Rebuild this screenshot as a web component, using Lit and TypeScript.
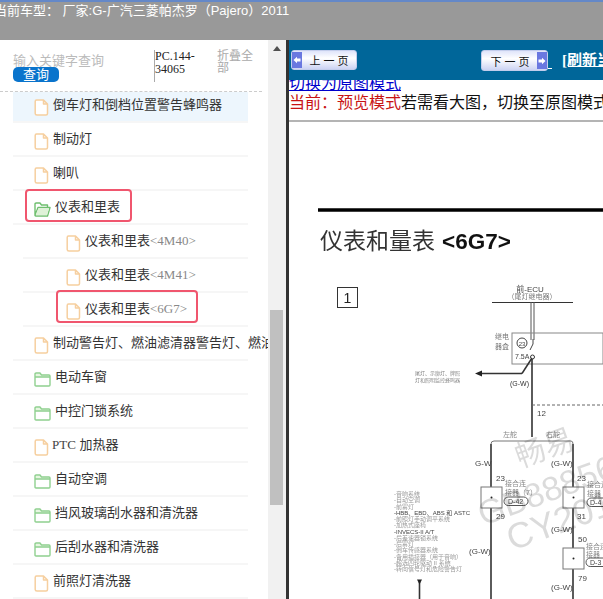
import { LitElement, html, css, svg } from "lit";
import { customElement } from "lit/decorators.js";

const fileIcon = svg`<svg class="ic" width="15" height="17" viewBox="0 0 15 17"><path d="M2.5 1H9.5L13.5 5V14.5Q13.5 16 12 16H3Q1.2 16 1.2 14.5V2.5Q1.2 1 2.5 1ZM9.5 1V5H13.5" fill="#fff" stroke="#f6cf9f" stroke-width="1.5" stroke-linejoin="round"/></svg>`;
const folderIcon = svg`<svg class="ic" width="17" height="15" viewBox="0 0 17 15"><path d="M1.4 1.8H6L7.5 3.4H15.6V5H1.4Z" fill="#e6f6e0"/><path d="M1 13V2.2Q1 1 2.2 1H6L7.5 3H15Q16 3 16 4V13Q16 14 15 14H2Q1 14 1 13ZM1 5H16" fill="none" stroke="#8fd08f" stroke-width="1.4" stroke-linejoin="round"/></svg>`;
const openIcon = svg`<svg class="ic" width="17" height="15" viewBox="0 0 17 15"><path d="M1 13V2.2Q1 1 2.2 1H6L7.5 3H13.5V5.5M1 13.5L4 5.5H16L13.5 14H2Z" fill="#fff" stroke="#6fbf6f" stroke-width="1.4" stroke-linejoin="round"/><path d="M1.8 12.5L4.4 6.2H15.2L13 13.3H2Z" fill="#dff2d8"/></svg>`;

type Row = { t: string; s?: string; k: "f" | "d" | "o"; lvl?: boolean; hi?: boolean; latin?: string };
const rows: Row[] = [
  { t: "倒车灯和倒档位置警告蜂鸣器", k: "f", hi: true },
  { t: "制动灯", k: "f" },
  { t: "喇叭", k: "f" },
  { t: "仪表和里表", k: "o" },
  { t: "仪表和里表", s: "<4M40>", k: "f", lvl: true },
  { t: "仪表和里表", s: "<4M41>", k: "f", lvl: true },
  { t: "仪表和里表", s: "<6G7>", k: "f", lvl: true },
  { t: "制动警告灯、燃油滤清器警告灯、燃油", k: "f" },
  { t: "电动车窗", k: "d" },
  { t: "中控门锁系统", k: "d" },
  { t: " 加热器", latin: "PTC", k: "f" },
  { t: "自动空调", k: "d" },
  { t: "挡风玻璃刮水器和清洗器", k: "d" },
  { t: "后刮水器和清洗器", k: "d" },
  { t: "前照灯清洗器", k: "f" },
];

const listLines = ["-音响系统","-自动空调","-前雾灯","-HBB、EBD、ABS 和 ASTC","-前照灯手动调平系统","-加热式座椅","-INVECS-II A/T","-后差速器锁系统","-后雾灯","-倒车传感器系统","-备用插接器（用于音响）","-超选四轮驱动 II 系统","-转向信号灯和危险警告灯"];

@customElement("app-root")
export class AppRoot extends LitElement {
  static styles = css`
    :host { display: block; width: 603px; height: 599px; overflow: hidden; font-family: "Liberation Sans","Noto Sans CJK SC",sans-serif; background: #fff; }
    .top { height: 38px; border-top: 2px solid #6488c8; background: #999; color: #fff; font-size: 13px; line-height: 17px; white-space: nowrap; overflow: hidden; }
    .top span { display: block; margin-left: -6px; }
    .main { display: flex; height: 559px; }
    .left { width: 286px; display: flex; flex: none; background: #fff; }
    .pane { width: 268px; flex: none; overflow: hidden; }
    .search { height: 52px; display: flex; box-sizing: border-box; padding: 10px 0 0 13px; border-bottom: 1px dashed #ccc; width: 262px; position: relative; z-index: 1; background: #fff; }
    .sbox { width: 141px; flex: none; color: #bbb; font-size: 13px; }
    .sbox .in { height: 17px; padding-top: 3px; box-sizing: border-box; line-height: 16px; }
    .btn { display: block; width: 46px; height: 15px; background: #0a74cc; border-radius: 5px; color: #fff; font-size: 13px; line-height: 15px; text-align: center; }
    .pc { width: 63px; flex: none; height: 32px; border-left: 1px solid #aaa; box-sizing: border-box; font: 12px/13px "Liberation Serif",serif; color: #222; }
    .fold { width: 38px; color: #aaa; font-size: 12px; line-height: 12px; }
    .list { width: 235px; margin: -3px 0 0 13px; position: relative; }
    .row { height: 34px; box-sizing: border-box; border-bottom: 2px solid #f6f6f6; display: flex; align-items: center; font-size: 13px; color: #333; white-space: nowrap; padding: 0 0 4px 21px; }
    .row.hi { background: #edf6fd; }
    .row.l1 { margin-left: 10px; padding-left: 43px; }
    .row .ic { flex: none; margin: 8px 4px 0 0; }
    .row.tight .ic { margin-right: 3px; }
    .row .sub { font-family: "Liberation Serif",serif; font-size: 13px; color: #888; }
    .row .lat { font-family: "Liberation Serif",serif; color: #444; }
    .mark { position: absolute; border: 2px solid #f0566e; border-radius: 4px; box-sizing: border-box; }
    .m1 { left: 12px; top: 100px; width: 107px; height: 33px; }
    .m2 { left: 43px; top: 201px; width: 142px; height: 33px; }
    .sb { width: 18px; flex: none; background: #f1f1f1; position: relative; }
    .sb .up { width: 0; height: 0; border: 4px solid transparent; border-top: 0; border-bottom: 5px solid #505050; margin: 6px 0 0 5px; }
    .sb .th { position: absolute; top: 270px; left: 2px; width: 13px; height: 195px; background: #c0c0c0; }
    .split { width: 3px; flex: none; background: #333; }
    .right { flex: 1; display: flex; flex-direction: column; min-width: 0; overflow: hidden; }
    .nav { height: 40px; background: #006699; flex: none; display: flex; padding: 10px 0 0 2px; box-sizing: border-box; white-space: nowrap; align-items: flex-start; position: relative; z-index: 1; }
    .pg { flex: none; width: 66px; height: 20px; box-sizing: border-box; border: 1px solid #c3cdec; border-radius: 3px; background: linear-gradient(#dfe4fa,#ffffff 40%,#ccd3f3); color: #111; font-size: 11px; word-spacing: 0; display: flex; align-items: center; position: relative; justify-content: center; }
    .pg i { position: absolute; top: 1px; bottom: 1px; width: 10px; background: #6a78e0; display: flex; align-items: center; justify-content: center; }
    .pg.p i { left: 0; }
    .pg.n i { right: 0; }
    .pg.p { padding-left: 10px; }
    .pg.n { margin-left: 124px; height: 21px; width: 67px; padding-right: 9px; }
    .under { flex: none; border-bottom: 1px solid #fff; width: 4px; height: 18px; }
    .ref { flex: none; color: #fff; font: bold 15px/20px "Liberation Serif","Noto Sans CJK SC",serif; text-decoration: underline; margin-left: 10px; }
    .lnk { color: #0000cc; text-decoration: underline; font-size: 16px; line-height: 16px; height: 9px; display: block; margin-top: -4px; }
    .cur { font-size: 16px; line-height: 18px; white-space: nowrap; margin-top: 9px; color: #111; height: 26px; flex: none; }
    .cur b { font-weight: normal; color: #c81414; }
    .hr { height: 2px; background: #b4b4b4; flex: none; }
    .pic { flex: 1; filter: blur(0.45px); }
    svg.dg { display: block; }
  `;
  renderRow(r: Row) {
    const ic = r.k === "f" ? fileIcon : r.k === "d" ? folderIcon : openIcon;
    const cls = `row ${r.hi ? "hi" : ""} ${r.lvl ? "l1" : ""} ${r.latin ? "tight" : ""}`;
    return html`<div class=${cls}>${ic}<span>${r.latin ? html`<span class="lat">${r.latin}</span>` : ""}${r.t}${r.s ? html`<span class="sub">${r.s}</span>` : ""}</span></div>`;
  }
  render() {
    return html`
      <div class="top"><span>当前车型： 厂家:G-广汽三菱帕杰罗（Pajero）2011</span></div>
      <div class="main">
        <div class="left">
          <div class="pane">
            <div class="search">
              <div class="sbox"><div class="in">输入关键字查询</div><span class="btn">查询</span></div>
              <div class="pc">PC.144-34065</div>
              <div class="fold">折叠全部</div>
            </div>
            <div class="list">
              ${rows.map((r) => this.renderRow(r))}
              <div class="mark m1"></div>
              <div class="mark m2"></div>
            </div>
          </div>
          <div class="sb"><div class="up"></div><div class="th"></div></div>
        </div>
        <div class="split"></div>
        <div class="right">
          <div class="nav">
            <div class="pg p"><i><svg width="8" height="8" viewBox="0 0 8 8"><path d="M0.5 4L4 0.8V2.6H7.5V5.4H4V7.2Z" fill="#fff"/></svg></i>上 一 页</div>
            <div class="pg n">下 一 页<i><svg width="8" height="8" viewBox="0 0 8 8"><path d="M7.5 4L4 0.8V2.6H0.5V5.4H4V7.2Z" fill="#fff"/></svg></i></div>
            <div class="under"></div>
            <div class="ref">[刷新当前页]</div>
          </div>
          <a class="lnk">切换为原图模式</a>
          <div class="cur"><b>当前：预览模式</b>若需看大图，切换至原图模式</div>
          <div class="hr"></div>
          <div class="pic">${this.diagram()}</div>
        </div>
      </div>`;
  }
  diagram() {
    const t = (x: number, y: number, s: string, size: number, extra: Record<string, string> = {}) =>
      svg`<text x=${x} y=${y} font-size=${size} fill=${extra.fill ?? "#444"} font-weight=${extra.w ?? "normal"} text-anchor=${extra.a ?? "start"}>${s}</text>`;
    const line = (x1: number, y1: number, x2: number, y2: number, w = 1, c = "#333") =>
      svg`<line x1=${x1} y1=${y1} x2=${x2} y2=${y2} stroke=${c} stroke-width=${w}/>`;
    const box = (x: number, y: number) =>
      svg`<rect x=${x} y=${y} width="21" height="21" fill="#fff" stroke="#777"/><circle cx=${x + 10.5} cy=${y + 10.5} r="1" fill="#222"/>`;
    const oval = (x: number, y: number, w: number) =>
      svg`<rect x=${x} y=${y} width=${w} height="8.5" rx="4.2" fill="none" stroke="#555"/>`;
    const gray = { fill: "#888" };
    return svg`<svg class="dg" width="314" height="477" viewBox="289 122 314 477" font-family="'Liberation Sans','Noto Sans CJK SC',sans-serif">
      ${line(318, 210, 603, 210, 3.4, "#000")}
      ${t(320, 249, "仪表和量表", 23, { fill: "#333" })}
      ${t(442, 249, "<6G7>", 22.5, { fill: "#111", w: "bold" })}
      <rect x="337.5" y="287.5" width="20" height="20" fill="#fff" stroke="#333"/>
      ${t(347.5, 303, "1", 14, { a: "middle", fill: "#222" })}
      ${t(530, 292, "前-ECU", 8, { a: "middle" })}
      ${t(532, 299, "（尾灯继电器）", 7, { a: "middle", fill: "#777" })}
      ${line(492, 302.5, 573, 302.5, 1)}
      ${line(531, 302, 531, 340, 1, "#555")}${line(534, 302, 534, 340, 1, "#555")}
      <rect x="512" y="333" width="91" height="31" fill="none" stroke="#888"/>
      ${t(495, 339, "继电", 7, { fill: "#777" })}${t(495, 349, "器盒", 7, { fill: "#777" })}
      <circle cx="522" cy="343" r="5" fill="none" stroke="#444"/>${t(522, 345.5, "23", 6, { a: "middle" })}
      ${t(515, 359, "7.5A", 7)}
      <path d="M533 339L533 344L530 350" fill="none" stroke="#444"/><circle cx="532.5" cy="357" r="2" fill="#fff" stroke="#333"/>
      ${line(532, 358, 522, 373.5, 1.5)}${line(522, 373.5, 481, 373.5, 1.5)}
      <path d="M475 373.5L482 370.5V376.5Z" fill="#222"/>
      ${t(415, 375, "尾灯、示廓灯、牌照", 5, gray)}${t(415, 382, "灯和照明监控蜂鸣器", 5, gray)}
      ${t(510, 386, "(G-W)", 7, { fill: "#333" })}
      ${line(532, 359, 532, 437, 1.6)}
      <line x1="532" y1="405" x2="603" y2="405" stroke="#666" stroke-dasharray="3 2"/>
      ${t(537, 416, "12", 8)}
      ${t(503, 437, "左舵", 7, gray)}${t(546, 437, "右舵", 7, gray)}
      <path d="M491 444Q491 441 494 441H571Q573 441 573 444" fill="none" stroke="#777"/>
      ${line(491, 444, 491, 599, 1.6)}${line(573, 444, 573, 599, 1.6)}
      ${t(475, 466, "G-W", 8)}${t(551, 466, "(G-W)", 8)}
      ${t(496, 481, "23", 8)}${t(577, 481, "23", 8)}
      ${box(481, 487)}${box(563, 487)}
      ${t(505, 486, "接合连", 7, gray)}${t(505, 495, "接器（7）", 7, gray)}
      ${t(587, 487, "接合连", 7, gray)}${t(587, 496, "接器", 7, gray)}
      ${oval(504, 497, 24)}${t(508, 504, "D-42", 7)}
      ${oval(587, 498, 24)}${t(590, 505, "D-4", 7)}
      ${t(496, 519, "29", 8)}${t(577, 519, "31", 8)}
      ${t(551, 532, "(G-W)", 8)}${t(578, 542, "50", 8)}
      ${box(563, 548)}
      ${t(586, 549, "接合连", 7, gray)}${t(586, 557, "接器", 7, gray)}
      ${oval(586, 558, 24)}${t(590, 565, "D-3", 7)}
      ${t(578, 581, "79", 8)}${t(551, 590, "(G-W)", 8)}${t(469, 554, "(G-W)", 8)}
      ${listLines.map((l, i) => t(394, 496 + i * 6.25, l, 6, /[A-Z]{3}/.test(l) ? { fill: "#444" } : { fill: "#999" }))}
      ${line(419.5, 582, 419.5, 599, 1.6)}<path d="M417 579.5H422L419.5 584.5Z" fill="#222"/>
      <g fill="#000" opacity="0.14">
        <text x="0" y="0" font-size="30" transform="translate(520 468) rotate(-20)">畅易</text>
        <text x="0" y="0" font-size="34" transform="translate(483 526) rotate(-20)">GB888560</text>
        <text x="0" y="0" font-size="36" transform="translate(512 551) rotate(-20)">CY2016</text>
      </g>
    </svg>`;
  }
}
